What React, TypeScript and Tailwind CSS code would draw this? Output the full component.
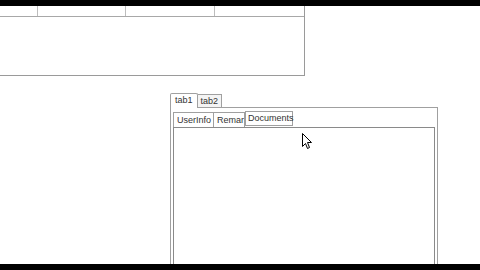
import React from "react";

function Cursor() {
  return (
    <svg width="12" height="18" viewBox="0 0 12 18" className="absolute left-[302px] top-[133px]">
      <path d="M0.5 0.5 L0.5 13.5 L3.5 10.5 L5.5 15.5 L7.5 14.5 L5.5 9.5 L9.5 9.5 Z" fill="#fff" stroke="#000" strokeWidth="1" strokeLinejoin="miter" />
    </svg>
  );
}

export default function App() {
  const font = { fontFamily: '"Liberation Sans", Arial, sans-serif' };
  return (
    <div className="relative w-[480px] h-[270px] bg-white overflow-hidden" style={font}>
      <div className="h-[6px] bg-black" />
      {/* grid */}
      <div className="w-[305px] h-[70px] border-r border-b border-[#9a9a9a] flex flex-col">
        <div className="h-[11px] border-b border-[#a8a8a8] flex">
          <div className="w-[38px] border-r border-[#bdbdbd]" />
          <div className="w-[88px] border-r border-[#bdbdbd]" />
          <div className="w-[89px] border-r border-[#bdbdbd]" />
          <div className="flex-1" />
        </div>
        <div className="flex-1" />
      </div>
      {/* tab control */}
      <div className="ml-[170px] mt-[16px] w-[268px] flex flex-col">
        <div className="flex items-end h-[15px] text-[9px] text-[#333]">
          <div className="h-[15px] px-[4px] border border-b-0 border-[#a0a0a0] bg-white rounded-t-[2px] leading-[13px] relative z-10 -mb-px">tab1</div>
          <div className="h-[13px] px-[3px] border border-l-0 border-b-0 border-[#a0a0a0] bg-[#f4f4f4] leading-[12px]">tab2</div>
        </div>
        <div className="h-[160px] border border-[#a0a0a0] border-b-0 bg-white px-[2px] pt-[3px] flex flex-col">
          <div className="flex items-end h-[16px] text-[9px] text-[#333] relative">
            <div className="h-[15px] w-[41px] pl-[3px] border border-b-0 border-[#a0a0a0] bg-white leading-[14px]">UserInfo</div>
            <div className="h-[15px] w-[31px] pl-[3px] border border-l-0 border-b-0 border-[#a0a0a0] bg-white leading-[14px] whitespace-nowrap overflow-hidden">Remar</div>
            <div className="absolute left-[72px] top-0 h-[15px] w-[48px] pl-[2px] border border-[#a0a0a0] bg-white leading-[13px] z-10">Documents</div>
          </div>
          <div className="flex-1 border border-[#8a8a8a] border-b-0 bg-white" />
        </div>
      </div>
      <div className="absolute left-0 right-0 bottom-0 h-[6px] bg-black" />
      <Cursor />
    </div>
  );
}
